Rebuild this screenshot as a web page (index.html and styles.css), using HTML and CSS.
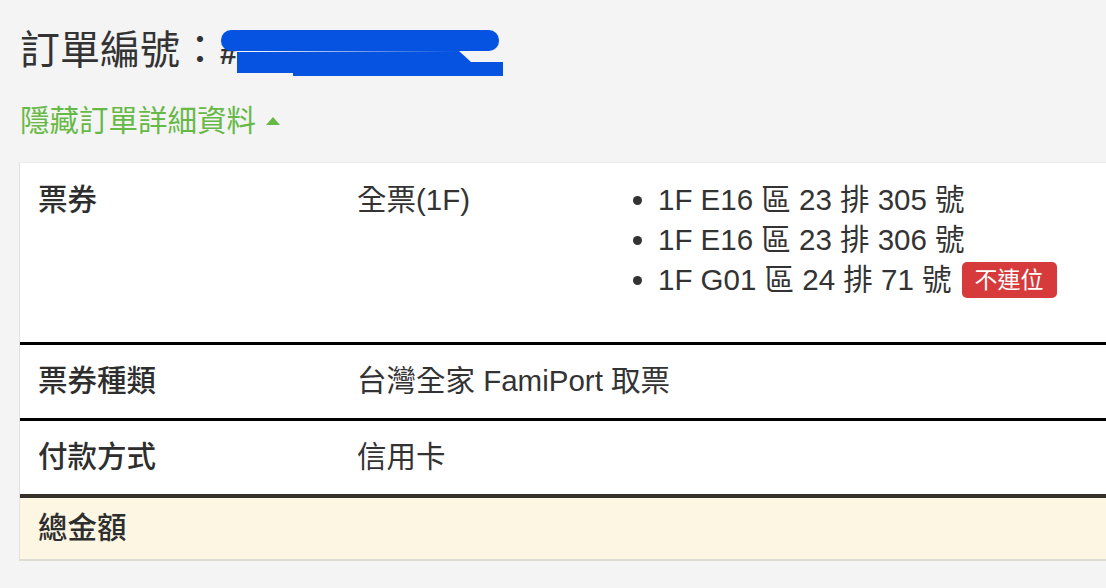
FILE: index.html
```html
<!DOCTYPE html>
<html lang="zh-Hant">
<head>
  <meta charset="UTF-8">
  <title>訂單明細</title>
  <link rel="stylesheet" href="styles.css">
</head>
<body>
  <div class="order">
    <h1 class="order-no">訂單編號：<span class="no-value">#</span>
      <!-- 遮蓋訂單號碼 -->
      <svg class="mask" width="292" height="52" viewBox="0 0 292 52">
        <rect x="8" y="4" width="278" height="21" rx="10" fill="#0553e0"/>
        <path d="M24 26 L246 25 L258 36 L290 36 L290 50 L80 50 L80 47 L24 47 Z" fill="#0553e0"/>
      </svg>
    </h1>

    <a class="toggle" href="#">隱藏訂單詳細資料<span class="caret"></span></a>

    <table class="detail">
      <colgroup>
        <col class="c-label">
        <col class="c-value">
        <col>
      </colgroup>
      <tr class="tickets">
        <th>票券</th>
        <td>全票(1F)</td>
        <td class="seat-cell">
          <ul class="seats">
            <li>1F E16 區 23 排 305 號</li>
            <li>1F E16 區 23 排 306 號</li>
            <li>1F G01 區 24 排 71 號 <span class="badge">不連位</span></li>
          </ul>
        </td>
      </tr>
      <tr>
        <th>票券種類</th>
        <td colspan="2">台灣全家 FamiPort 取票</td>
      </tr>
      <tr>
        <th>付款方式</th>
        <td colspan="2">信用卡</td>
      </tr>
      <tr class="total">
        <th>總金額</th>
        <td colspan="2"></td>
      </tr>
    </table>
  </div>
</body>
</html>
```

FILE: styles.css
```css
body {
  margin: 0;
  background: #f4f4f5;
  color: #333;
  font-family: "Liberation Sans", "Noto Sans CJK TC", sans-serif;
  overflow: hidden;
}
.order {
  padding-left: 19px;
}
.order-no {
  position: relative;
  margin: 26px 0 0 1px;
  font-size: 40px;
  font-weight: normal;
  line-height: 48px;
  color: #333;
}
.no-value {
  font-size: 30px;
  font-weight: bold;
}
.mask {
  position: absolute;
  left: 193px;
  top: 0;
}
.toggle {
  display: inline-block;
  margin: 23px 0 0 1px;
  font-size: 29.5px;
  line-height: 40px;
  color: #67b946;
  text-decoration: none;
}
.caret {
  display: inline-block;
  width: 0;
  height: 0;
  margin-left: 10px;
  border-left: 7px solid transparent;
  border-right: 7px solid transparent;
  border-bottom: 8px solid #67b946;
  vertical-align: 6px;
}
.detail {
  width: 1100px;
  margin-top: 21px;
  table-layout: fixed;
  border-collapse: separate;
  border-spacing: 0;
  background: #fff;
  border-left: 1px solid #e2e2e2;
  border-top: 1px solid #ececec;
  border-bottom: 2px solid #dedbd4;
  font-size: 29.5px;
  line-height: 40px;
}
.c-label {
  width: 319px;
}
.c-value {
  width: 280px;
}
.detail th,
.detail td {
  padding: 16px 18px 17px;
  text-align: left;
  vertical-align: middle;
  border-top: 3px solid #000;
}
.detail th {
  font-weight: 500;
  color: #2e2e2e;
}
.detail .tickets th,
.detail .tickets td {
  border-top: 0;
  padding-top: 17px;
  padding-bottom: 42px;
  vertical-align: top;
}
.detail .tickets .seat-cell {
  padding-left: 14px;
}
.seats {
  margin: 0;
  padding: 0;
  list-style: none;
}
.seats li {
  display: flex;
  align-items: center;
  height: 40px;
  white-space: nowrap;
}
.seats li::before {
  content: "";
  flex: none;
  width: 9px;
  height: 9px;
  margin-right: 16px;
  border-radius: 50%;
  background: #333;
}
.badge {
  display: inline-block;
  margin-left: 10px;
  padding: 0 13px;
  height: 36px;
  line-height: 36px;
  border-radius: 5px;
  background: #d63a3a;
  color: #fff;
  font-size: 23px;
}
.detail .total th,
.detail .total td {
  padding-top: 10px;
  padding-bottom: 11px;
  border-top: 4px solid #35302a;
  background: #fcf6e2;
}
```
